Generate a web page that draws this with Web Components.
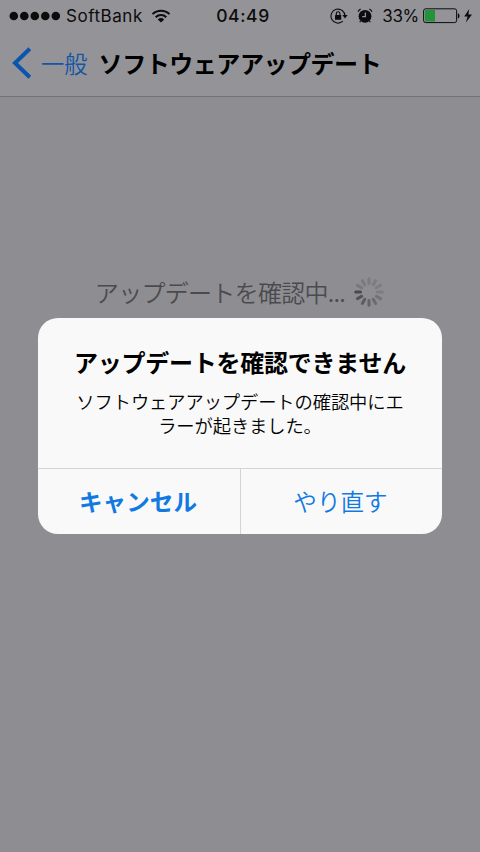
<!DOCTYPE html>
<html lang="ja">
<head>
<meta charset="utf-8">
<title>ソフトウェアアップデート</title>
<style>
html,body{margin:0;height:100%;overflow:hidden;background:#8e8d92}
body{font-family:"Noto Sans CJK JP",sans-serif;color:#000}
</style>
</head>
<body>
<update-screen></update-screen>
<script>
const define = (name, html) => customElements.define(name, class extends HTMLElement {
  constructor() {
    super();
    this.attachShadow({ mode: 'open' }).innerHTML = html;
  }
});

define('status-bar', `
<style>
:host{display:grid;grid-template-columns:1fr auto 1fr;align-items:center;height:31px;padding:0 7px 0 9px;box-sizing:border-box;font:17px/31px Inter,sans-serif;color:#0c0c0d}
.left,.right{display:flex;align-items:center}
.right{justify-content:flex-end}
.carrier{margin:1px 8px 0 6px;letter-spacing:.55px}
.time{font-weight:500;letter-spacing:.6px;font-size:17.5px;line-height:29px;padding:0 0 2px 4px}
.pct{margin:1px 4px 0 9px;letter-spacing:-.3px}
svg{display:block;flex:none}
</style>
<div class="left">
<svg width="51" height="10" fill="#0c0c0d"><circle cx="4.8" cy="5" r="4.3"/><circle cx="15.3" cy="5" r="4.3"/><circle cx="25.8" cy="5" r="4.3"/><circle cx="36.3" cy="5" r="4.3"/><circle cx="46.8" cy="5" r="4.3"/></svg>
<span class="carrier">SoftBank</span>
<svg width="20" height="14" viewBox="0 0 20 14" fill="none" stroke="#0c0c0d" stroke-width="2"><path d="M1.5 5.1a12.2 12.2 0 0 1 17 0M4.7 8.2a7.5 7.5 0 0 1 10.6 0"/><path d="M10 13.6 6.8 10.4a4.5 4.5 0 0 1 6.4 0z" fill="#0c0c0d" stroke="none"/></svg>
</div>
<span class="time">04:49</span>
<div class="right">
<svg width="18" height="16" viewBox="0 0 18 16" fill="none" stroke="#0c0c0d" stroke-width="1.1"><path d="M12.8 13.2A7 7 0 1 1 15 8"/><path d="M12.4 7h5.2L15 10.5z" fill="#0c0c0d" stroke="none"/><rect x="5" y="7" width="6.2" height="4.8" rx=".5" fill="#0c0c0d" stroke="none"/><path d="M6.3 7.4V5.6a1.8 1.8 0 0 1 3.6 0v1.8"/></svg>
<svg style="margin-left:9px" width="16" height="16" viewBox="0 0 16 16" fill="none" stroke="#0c0c0d" stroke-width="1.2"><circle cx="8" cy="8.3" r="6.4" fill="#0c0c0d" stroke="none"/><path d="M1 3.6A7 7 0 0 1 3.6 1M12.4 1A7 7 0 0 1 15 3.6M3.6 13l-.9 1.2M12.4 13l.9 1.2"/><path d="M8.4 4.5v4.2H5.2" stroke="#929297" stroke-width="1.3"/></svg>
<span class="pct">33%</span>
<svg width="50" height="16" viewBox="0 0 50 16"><rect x=".6" y=".8" width="33" height="13.8" rx="2" fill="none" stroke="#0c0c0d" stroke-width="1"/><path d="M2 2h10v11.5H2z" fill="#24913b"/><path d="M34.8 5.2c2.3.4 2.3 4.8 0 5.2z" fill="#0c0c0d"/><path d="M46.2 1 41.2 8.5h3.4L42.8 14.5l6.2-8h-3.6z" fill="#0c0c0d"/></svg>
</div>`);

define('nav-bar', `
<style>
:host{display:flex;align-items:center;height:66px;box-sizing:border-box;padding:0 0 2px 12px;border-bottom:1px solid #737278}
svg{display:block;flex:none}
.back{display:flex;align-items:center;color:#1156a7;font-size:23.3px;font-weight:350}
.back span{margin-left:9px;line-height:34px}
h1{margin:0 0 0 11px;font-size:24px;line-height:34px;font-weight:700;letter-spacing:-.45px;white-space:nowrap}
</style>
<div class="back"><svg width="20" height="32" viewBox="0 0 20 32"><path d="M17.8 1.8 3 16l14.8 14.2" fill="none" stroke="#0a55ae" stroke-width="4"/></svg><span><slot name="back"></slot></span></div>
<h1><slot></slot></h1>`);

customElements.define('activity-spinner', class extends HTMLElement {
  constructor() {
    super();
    const shades = ['#7c7b80','#7d7c81','#7e7d82','#7d7c81','#737277','#6b6a6f','#646368','#5c5b60','#535257','#4a494e','#79787d','#7b7a7f'];
    const spokes = shades.map((c, i) => `<path d="M0-8.5V-13.3" stroke="${c}" transform="rotate(${i * 30})"/>`).join('');
    this.attachShadow({ mode: 'open' }).innerHTML = `
<style>:host{display:block;width:32px;height:32px}svg{display:block}</style>
<svg width="32" height="32" viewBox="-16 -16 32 32" stroke-width="3" stroke-linecap="round">${spokes}</svg>`;
  }
});

define('update-alert', `
<style>
:host{display:grid;grid-template-rows:150px 1fr;width:404px;height:216px;border-radius:20px;background:#f9f9f9;overflow:hidden;text-align:center}
.body{padding-top:26px}
h2{margin:0;font-size:24px;line-height:36px;font-weight:700;letter-spacing:-.25px;white-space:nowrap}
.message{margin-top:9px;font-size:18.3px;line-height:24px;font-weight:350;letter-spacing:-.1px}
::slotted([slot=message]){display:block;height:24px;white-space:nowrap}
.actions{display:grid;grid-template-columns:202px 1fr;border-top:1px solid #d4d4d6;font-size:23.6px;color:#1279e3}
.actions div{display:flex;align-items:center;justify-content:center;padding:0 2px 2px 0}
.actions div+div{border-left:1px solid #d4d4d6;font-weight:350}
.actions .cancel{font-weight:700}
</style>
<div class="body"><h2><slot name="title"></slot></h2><div class="message"><slot name="message"></slot></div></div>
<div class="actions"><div class="cancel"><slot name="cancel"></slot></div><div><slot name="retry"></slot></div></div>`);

define('update-screen', `
<style>
:host{display:flex;flex-direction:column;width:480px;height:852px;background:#8e8d92}
header{background:#949397}
.checking{display:flex;justify-content:center;align-items:center;height:32px;margin-top:179px;color:#4b4b4f;font-size:24px;font-weight:350;line-height:32px;white-space:nowrap}
.checking span{letter-spacing:-.7px}
activity-spinner{margin-left:8px}
update-alert{margin:10px 0 0 38px}
</style>
<header><status-bar></status-bar><nav-bar><span slot="back">一般</span>ソフトウェアアップデート</nav-bar></header>
<div class="checking"><span>アップデートを確認中...</span><activity-spinner></activity-spinner></div>
<update-alert><span slot="title">アップデートを確認できません</span><span slot="message">ソフトウェアアップデートの確認中にエ</span><span slot="message">ラーが起きました。</span><span slot="cancel">キャンセル</span><span slot="retry">やり直す</span></update-alert>`);
</script>
</body>
</html>
